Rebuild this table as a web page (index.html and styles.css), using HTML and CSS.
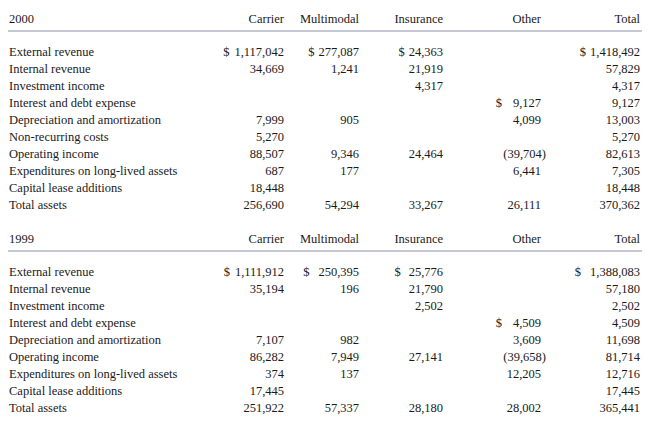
FILE: index.html
```html
<!DOCTYPE html>
<html>
<head>
<meta charset="utf-8">
<link rel="stylesheet" href="styles.css">
</head>
<body>
<div class="page">
  <table class="seg">
    <colgroup>
      <col class="c-label"><col class="c-carrier"><col class="c-multi"><col class="c-ins"><col class="c-other"><col class="c-total">
    </colgroup>
    <thead>
      <tr class="head">
        <th class="lbl">2000</th><th>Carrier</th><th>Multimodal</th><th>Insurance</th><th class="other">Other</th><th>Total</th>
      </tr>
    </thead>
    <tbody>
      <tr class="spacer"><td colspan="6"></td></tr>
      <tr><td class="lbl">External revenue</td><td><span class="cur g5">$</span>1,117,042</td><td><span class="cur g4">$</span>277,087</td><td><span class="cur g4">$</span>24,363</td><td class="other"></td><td><span class="cur g4">$</span>1,418,492</td></tr>
      <tr><td class="lbl">Internal revenue</td><td>34,669</td><td>1,241</td><td>21,919</td><td class="other"></td><td>57,829</td></tr>
      <tr><td class="lbl">Investment income</td><td></td><td></td><td>4,317</td><td class="other"></td><td>4,317</td></tr>
      <tr><td class="lbl">Interest and debt expense</td><td></td><td></td><td></td><td class="other"><span class="cur g11">$</span>9,127</td><td>9,127</td></tr>
      <tr><td class="lbl">Depreciation and amortization</td><td>7,999</td><td>905</td><td></td><td class="other">4,099</td><td>13,003</td></tr>
      <tr><td class="lbl">Non-recurring costs</td><td>5,270</td><td></td><td></td><td class="other"></td><td>5,270</td></tr>
      <tr><td class="lbl">Operating income</td><td>88,507</td><td>9,346</td><td>24,464</td><td class="other"><span class="neg">(39,704)</span></td><td>82,613</td></tr>
      <tr><td class="lbl">Expenditures on long-lived assets</td><td>687</td><td>177</td><td></td><td class="other">6,441</td><td>7,305</td></tr>
      <tr><td class="lbl">Capital lease additions</td><td>18,448</td><td></td><td></td><td class="other"></td><td>18,448</td></tr>
      <tr><td class="lbl">Total assets</td><td>256,690</td><td>54,294</td><td>33,267</td><td class="other">26,111</td><td>370,362</td></tr>
    </tbody>
  </table>

  <table class="seg second">
    <colgroup>
      <col class="c-label"><col class="c-carrier"><col class="c-multi"><col class="c-ins"><col class="c-other"><col class="c-total">
    </colgroup>
    <thead>
      <tr class="head">
        <th class="lbl">1999</th><th>Carrier</th><th>Multimodal</th><th>Insurance</th><th class="other">Other</th><th>Total</th>
      </tr>
    </thead>
    <tbody>
      <tr class="spacer"><td colspan="6"></td></tr>
      <tr><td class="lbl">External revenue</td><td><span class="cur g5">$</span>1,111,912</td><td><span class="cur g9">$</span>250,395</td><td><span class="cur g8">$</span>25,776</td><td class="other"></td><td><span class="cur g9">$</span>1,388,083</td></tr>
      <tr><td class="lbl">Internal revenue</td><td>35,194</td><td>196</td><td>21,790</td><td class="other"></td><td>57,180</td></tr>
      <tr><td class="lbl">Investment income</td><td></td><td></td><td>2,502</td><td class="other"></td><td>2,502</td></tr>
      <tr><td class="lbl">Interest and debt expense</td><td></td><td></td><td></td><td class="other"><span class="cur g11">$</span>4,509</td><td>4,509</td></tr>
      <tr><td class="lbl">Depreciation and amortization</td><td>7,107</td><td>982</td><td></td><td class="other">3,609</td><td>11,698</td></tr>
      <tr><td class="lbl">Operating income</td><td>86,282</td><td>7,949</td><td>27,141</td><td class="other"><span class="neg">(39,658)</span></td><td>81,714</td></tr>
      <tr><td class="lbl">Expenditures on long-lived assets</td><td>374</td><td>137</td><td></td><td class="other">12,205</td><td>12,716</td></tr>
      <tr><td class="lbl">Capital lease additions</td><td>17,445</td><td></td><td></td><td class="other"></td><td>17,445</td></tr>
      <tr><td class="lbl">Total assets</td><td>251,922</td><td>57,337</td><td>28,180</td><td class="other">28,002</td><td>365,441</td></tr>
    </tbody>
  </table>
</div>
</body>
</html>
```

FILE: styles.css
```css
html, body {
  margin: 0;
  padding: 0;
  background: #ffffff;
}

.page {
  padding: 11px 8px 0 8px;
  font-family: "Liberation Serif", "Times New Roman", serif;
  font-size: 12.5px;
  color: #1a1a1a;
}

.seg {
  width: 634px;
  border-collapse: collapse;
  table-layout: fixed;
}

.second {
  margin-top: 17px;
}

.c-label { width: 192px; }
.c-carrier { width: 84px; }
.c-multi { width: 75px; }
.c-ins { width: 84px; }
.c-other { width: 98px; }
.c-total { width: 101px; }

th, td {
  padding: 0;
  text-align: right;
  white-space: nowrap;
  font-weight: normal;
  line-height: 17px;
  height: 17px;
}

th.lbl, td.lbl {
  text-align: left;
  padding-left: 1px;
}

td:last-child, th:last-child {
  padding-right: 2px;
}

.head th {
  height: 19px;
  line-height: 17px;
  vertical-align: top;
  border-bottom: 2px solid #c3cad6;
}

.spacer td {
  height: 12px;
}

.cur {
  display: inline-block;
}

.neg {
  display: inline-block;
  margin-right: -5px;
}

.g4 { margin-right: 4px; }
.g5 { margin-right: 5px; }
.g8 { margin-right: 8px; }
.g9 { margin-right: 9px; }
.g11 { margin-right: 11px; }
```
